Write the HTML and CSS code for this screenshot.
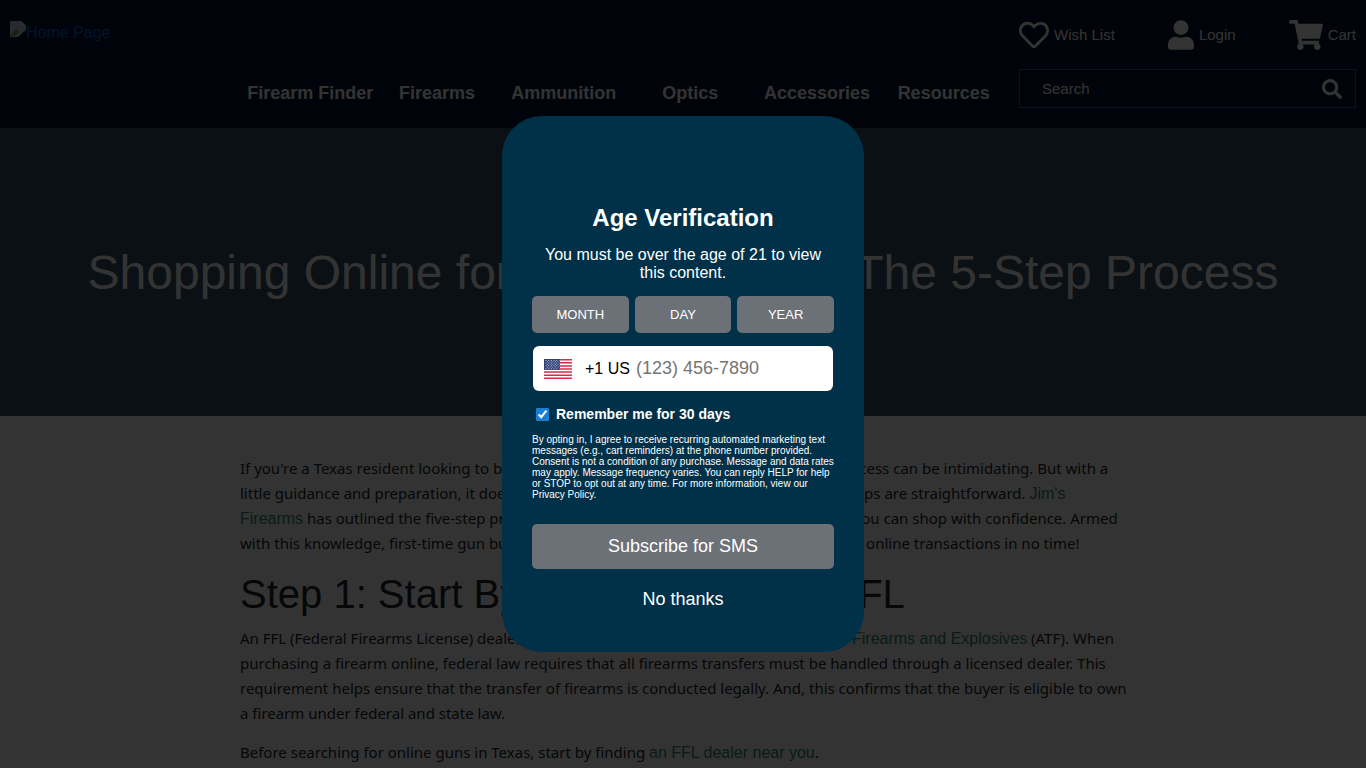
FILE: index.html
```html
<!DOCTYPE html>
<html lang="en">
<head>
    <meta charset="UTF-8">
    <meta name="viewport" content="width=device-width, initial-scale=1.0">
    <title>Shopping Online for Guns in Texas: The 5-Step Process</title>
    <link rel="stylesheet" href="styles.css">
</head>
<body>
    <header class="site-header">
        <a class="logo" href="#">
            <svg width="16" height="16" viewBox="0 0 16 16" aria-hidden="true">
                <path fill="#c3d3e8" d="M0 0h11l5 5v4L8 16H0z"/>
                <path fill="#f4f4f4" d="M11 0l5 5h-5z"/>
                <path fill="#6fa35a" d="M1 14l5-6 3 3-4 4H1z"/>
            </svg>Home Page
        </a>
        <nav class="main-nav">
            <a href="#">Firearm Finder</a>
            <a href="#">Firearms</a>
            <a href="#">Ammunition</a>
            <a href="#">Optics</a>
            <a href="#">Accessories</a>
            <a href="#">Resources</a>
        </nav>
        <div class="tools">
            <div class="account-links">
                <a href="#">
                    <svg width="30" height="30" viewBox="0 0 512 512" aria-hidden="true"><path fill="currentColor" d="M458.400 64.300C400.600 15.700 311.300 23 256 79.300 200.700 23 111.400 15.600 53.600 64.300-21.600 127.600-10.600 230.800 43 285.500l175.400 178.700c10 10.200 23.400 15.900 37.600 15.900 14.300 0 27.600-5.600 37.600-15.800L469 285.600c53.500-54.700 64.700-157.900-10.600-221.300zm-23.600 187.500L259.400 430.500c-2.400 2.400-4.400 2.400-6.800 0L77.200 251.800c-36.500-37.200-43.900-107.600 7.300-150.700 38.900-32.700 98.900-27.800 136.500 10.500l35 35.700 35-35.700c37.800-38.500 97.800-43.200 136.500-10.600 51.100 43.100 43.500 113.900 7.300 150.800z"/></svg>
                    Wish List
                </a>
                <a href="#">
                    <svg width="26" height="30" viewBox="0 0 448 512" aria-hidden="true"><path fill="currentColor" d="M224 256c70.700 0 128-57.300 128-128S294.700 0 224 0 96 57.300 96 128s57.300 128 128 128zm89.600 32h-16.700c-22.200 10.200-46.900 16-72.900 16s-50.600-5.800-72.900-16h-16.700C60.200 288 0 348.200 0 422.400V464c0 26.500 21.500 48 48 48h352c26.500 0 48-21.500 48-48v-41.600c0-74.200-60.200-134.400-134.400-134.400z"/></svg>
                    Login
                </a>
                <a href="#">
                    <svg width="34" height="30" viewBox="0 0 576 512" aria-hidden="true"><path fill="currentColor" d="M528.100 301.300l47.300-208C578.800 78.300 567.400 64 552 64H159.200l-9.200-44.800C147.800 8 137.900 0 126.500 0H24C10.700 0 0 10.700 0 24v16c0 13.300 10.700 24 24 24h69.900l70.200 343.400C147.300 417.100 136 435.200 136 456c0 30.900 25.100 56 56 56s56-25.100 56-56c0-15.700-6.400-29.800-16.800-40h209.600C430.400 426.200 424 440.300 424 456c0 30.900 25.100 56 56 56s56-25.100 56-56c0-22.200-12.900-41.300-31.600-50.400l5.500-24.300c3.400-15-8-29.300-23.400-29.300H218.100l-6.500-32h293.100c11.200 0 20.900-7.800 23.400-18.700z"/></svg>
                    Cart
                </a>
            </div>
            <form class="search">
                <input type="search" placeholder="Search" aria-label="Search">
                <button type="button" aria-label="Submit search">
                    <svg width="20" height="20" viewBox="0 0 512 512" aria-hidden="true"><path fill="currentColor" d="M505 442.700L405.300 343c-4.500-4.500-10.600-7-17-7H372c27.600-35.300 44-79.700 44-128C416 93.100 322.900 0 208 0S0 93.100 0 208s93.100 208 208 208c48.300 0 92.700-16.400 128-44v16.300c0 6.400 2.500 12.500 7 17l99.700 99.700c9.400 9.400 24.600 9.400 33.900 0l28.300-28.300c9.400-9.400 9.400-24.600.1-34zM208 336c-70.700 0-128-57.200-128-128 0-70.700 57.200-128 128-128 70.700 0 128 57.200 128 128 0 70.700-57.200 128-128 128z"/></svg>
                </button>
            </form>
        </div>
    </header>

    <section class="hero">
        <h1>Shopping Online for Guns in Texas: The 5-Step Process</h1>
    </section>

    <main class="article">
        <p>If you're a Texas resident looking to buy a firearm online for the first time, the whole process can be intimidating. But with a little guidance and preparation, it doesn't have to be difficult, and all of the necessary steps are straightforward. <a href="#">Jim's Firearms</a> has outlined the five-step process for purchasing guns online in Texas so that you can shop with confidence. Armed with this knowledge, first-time gun buyers will feel prepared and ready to complete their online transactions in no time!</p>
        <h2>Step 1: Start By Locating a Local FFL</h2>
        <p>An FFL (Federal Firearms License) dealer is licensed by the <a href="#">Bureau of Alcohol, Tobacco, Firearms and Explosives</a> (ATF). When purchasing a firearm online, federal law requires that all firearms transfers must be handled through a licensed dealer. This requirement helps ensure that the transfer of firearms is conducted legally. And, this confirms that the buyer is eligible to own a firearm under federal and state law.</p>
        <p>Before searching for online guns in Texas, start by finding <a href="#">an FFL dealer near you</a>.</p>
    </main>

    <div class="overlay">
        <form class="age-modal" role="dialog" aria-labelledby="age-title">
            <h2 id="age-title">Age Verification</h2>
            <p class="intro">You must be over the age of 21 to view this content.</p>
            <div class="birthdate">
                <select aria-label="Month"><option>MONTH</option></select>
                <select aria-label="Day"><option>DAY</option></select>
                <select aria-label="Year"><option>YEAR</option></select>
            </div>
            <div class="phone">
                <svg width="28" height="20" viewBox="0 0 28 20" aria-hidden="true">
                    <path fill="#fff" d="M0 0h28v20H0z"/>
                    <path stroke="#d02f44" stroke-width="1.54" d="M0 .77h28M0 3.850h28M0 6.920h28M0 10h28M0 13.080h28M0 16.150h28M0 19.230h28"/>
                    <path fill="#2e3f73" d="M0 0h16v10.770H0z"/>
                    <path stroke="#c3cbe0" stroke-dasharray="1 1.700" d="M1.500 1.500h14M1.500 4.100h14M1.500 6.700h14M1.500 9.300h14"/>
                    <path stroke="#c3cbe0" stroke-width=".8" stroke-dasharray="1 1.700" d="M2.900 2.800h12M2.900 5.400h12M2.900 8h12"/>
                </svg>
                <label for="phone">+1 US</label>
                <input id="phone" type="tel" placeholder="(123) 456-7890">
            </div>
            <label class="remember"><input type="checkbox" checked> Remember me for 30 days</label>
            <p class="terms">By opting in, I agree to receive recurring automated marketing text messages (e.g., cart reminders) at the phone number provided. Consent is not a condition of any purchase. Message and data rates may apply. Message frequency varies. You can reply HELP for help or STOP to opt out at any time. For more information, view our Privacy Policy.</p>
            <button class="subscribe" type="button">Subscribe for SMS</button>
            <button class="decline" type="button">No thanks</button>
        </form>
    </div>
</body>
</html>
```

FILE: styles.css
```css
* { box-sizing: border-box; }
html { overflow: hidden; }
body {
    margin: 0;
    font-family: "Liberation Sans", Arial, sans-serif;
    font-size: 16px;
    color: #212529;
    background: #fff;
}
a { text-decoration: none; }
input, select, button { font-family: inherit; }

/* Header */
.site-header {
    display: grid;
    grid-template-columns: 237px 1fr 337px;
    height: 128px;
    padding: 0 10px;
    background: #00102d;
    color: #fff;
}
.logo {
    display: flex;
    align-items: flex-start;
    padding-top: 21px;
    color: #0069d9;
    line-height: 24px;
}
.main-nav {
    display: grid;
    grid-template-columns: repeat(6, 1fr);
    align-self: end;
    padding: 0 12px 24px 0;
    text-align: center;
}
.main-nav a {
    color: #fff;
    font-size: 18px;
    font-weight: bold;
    line-height: 22px;
    white-space: nowrap;
}
.tools { padding-top: 20px; }
.account-links {
    display: flex;
    justify-content: space-between;
}
.account-links a {
    display: flex;
    align-items: center;
    gap: 5px;
    color: #fff;
    font-size: 15px;
    line-height: 30px;
}
.search {
    display: flex;
    align-items: center;
    height: 39px;
    margin-top: 19px;
    padding: 0 13px 0 22px;
    border: 1px solid #4a5a80;
}
.search input {
    flex: 1;
    min-width: 0;
    padding: 0;
    border: 0;
    background: none;
    color: #fff;
    font-size: 15px;
}
.search input::placeholder { color: #fff; }
.search button {
    display: flex;
    padding: 0;
    border: 0;
    background: none;
    color: #fff;
}

/* Hero */
.hero {
    display: flex;
    align-items: center;
    justify-content: center;
    height: 288px;
    background: #365264;
}
.hero h1 {
    margin: 0;
    color: #fff;
    font-size: 48px;
    font-weight: normal;
    text-align: center;
}

/* Article */
.article {
    max-width: 894px;
    margin: 0 auto;
    padding: 40px 0 0 4px;
    font-family: "Noto Sans", sans-serif;
    font-size: 15px;
    line-height: 25px;
}
.article p { margin: 0 0 14px; }
.article h2 {
    margin: 0 0 8px;
    font-family: "Liberation Sans", Arial, sans-serif;
    font-size: 40px;
    font-weight: normal;
    line-height: 48px;
}
.article a {
    color: #2f8a74;
    font-family: "Liberation Sans", Arial, sans-serif;
    font-size: 16px;
}

/* Age verification */
.overlay {
    position: fixed;
    inset: 0;
    display: flex;
    align-items: center;
    justify-content: center;
    background: rgba(0, 0, 0, 0.8);
}
.age-modal {
    display: flex;
    flex-direction: column;
    width: 362px;
    padding: 88px 30px 38px;
    border-radius: 40px;
    background: #003148;
    color: #fff;
}
.age-modal h2 {
    margin: 0 0 14px;
    font-size: 24px;
    line-height: 28px;
    text-align: center;
}
.intro {
    margin: 0 0 14px;
    line-height: 18px;
    text-align: center;
}
.birthdate {
    display: grid;
    grid-template-columns: repeat(3, 1fr);
    gap: 6px;
    margin-bottom: 13px;
}
.birthdate select {
    appearance: none;
    height: 37px;
    padding: 0;
    border: 0;
    border-radius: 5px;
    background: #6c7177;
    color: #fff;
    font-size: 13px;
    text-align: center;
    text-align-last: center;
}
.phone {
    display: flex;
    align-items: center;
    height: 45px;
    margin: 0 1px 15px;
    padding: 0 11px;
    border-radius: 6px;
    background: #fff;
    color: #000;
}
.phone label { margin: 0 6px 0 13px; }
.phone input {
    flex: 1;
    min-width: 0;
    padding: 0;
    border: 0;
    background: none;
    font-size: 18px;
}
.phone input::placeholder { color: #757575; }
.remember {
    display: flex;
    align-items: center;
    gap: 7px;
    margin-bottom: 12px;
    padding-left: 4px;
    font-size: 14px;
    font-weight: bold;
    line-height: 16px;
}
.remember input {
    width: 13px;
    height: 13px;
    margin: 0;
    accent-color: #1a7fd4;
}
.terms {
    margin: 0 0 24px;
    font-size: 10px;
    line-height: 11px;
}
.subscribe,
.decline {
    border: 0;
    color: #fff;
    font-size: 18px;
}
.subscribe {
    height: 45px;
    border-radius: 5px;
    background: #6c7177;
}
.decline {
    align-self: center;
    margin-top: 16px;
    padding: 4px;
    background: none;
}
```
